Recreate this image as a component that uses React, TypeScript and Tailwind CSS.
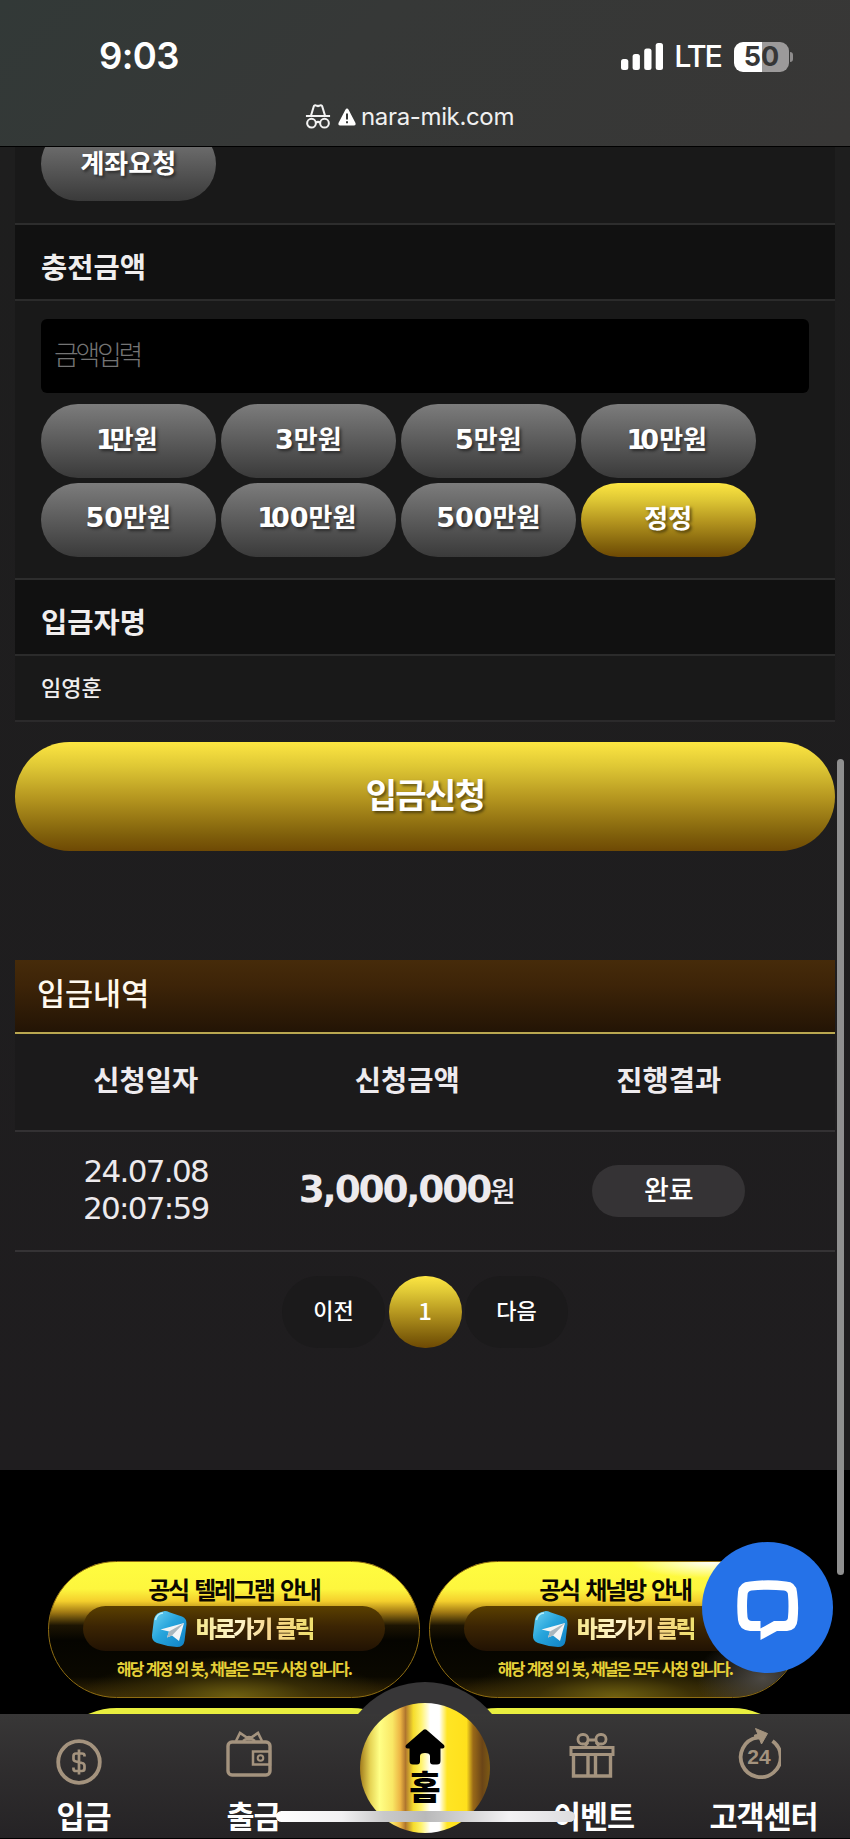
import type { ReactNode } from 'react';

const KR = "font-['Noto_Sans_CJK_KR',sans-serif]";
const gold = 'bg-[linear-gradient(180deg,#fde642_0%,#dfc835_22%,#b4951f_52%,#80600b_85%,#6e4904_100%)]';

function AmountButton({ num, label, active }: { num?: string; label: string; active?: boolean }) {
  const leadingOne = num?.startsWith('1');
  const rest = leadingOne ? num?.slice(1) : num;
  return (
    <button
      className={`flex h-[74px] w-[174.5px] items-center justify-center rounded-full text-[26px] font-bold leading-none text-white [text-shadow:2px_2px_3px_rgba(0,0,0,0.5)] ${
        active ? gold : 'bg-[linear-gradient(180deg,#7c7c7c,#3a3a3a)]'
      }`}
    >
      <span className="-mt-[5px] whitespace-nowrap">
        {num && (
          <span className="font-['DejaVu_Sans'] text-[27px]">
            {leadingOne && <span className="-ml-[3px] tracking-[-5px]">1</span>}
            {rest}
          </span>
        )}
        {label}
      </span>
    </button>
  );
}

function SectionTitle({ children }: { children: ReactNode }) {
  return (
    <h2 className="flex h-[76px] items-center border-b-2 border-[#2b2b2b] bg-[#111111] pl-[26px] pt-[9px] text-[28.5px] font-bold leading-none text-[#f0eeee]">
      {children}
    </h2>
  );
}

function TelegramIcon() {
  return (
    <svg viewBox="0 0 36 38" className="h-[38px] w-9 shrink-0">
      <defs>
        <linearGradient id="tg" x1="0" y1="0" x2="1" y2="1">
          <stop offset="0" stopColor="#6fd3f2" />
          <stop offset="0.45" stopColor="#27a5dc" />
          <stop offset="1" stopColor="#0f7fc4" />
        </linearGradient>
      </defs>
      <path d="M13 1.200 Q15 .8 19 2.500 L31 6.500 Q36 8.500 35.500 14 L33.500 31 Q32.500 37 26 37 Q16 36.500 6 33 Q.5 31 1 25 L3 9 Q4.500 2.500 13 1.200Z" fill="url(#tg)" />
      <path d="M4.500 10 Q6 3.500 12 3" fill="none" stroke="#b5efff" strokeWidth="1.500" />
      <path d="M9.500 19.500 L33 13 L28 31 L21 25.500 L16 27.500 L18 21.500Z" fill="#f3f5f6" />
      <path d="M18 21.500 L33 13 L21 25.500 L16 27.500Z" fill="#a9b6bd" />
    </svg>
  );
}

function Banner({ title, shine }: { title: string; shine?: boolean }) {
  return (
    <div className="relative flex h-[137px] w-[372px] flex-col items-center overflow-hidden rounded-full border border-[#8f6d12] bg-[radial-gradient(ellipse_42%_30%_at_50%_100%,#6f6010_0%,rgba(70,58,8,0.6)_50%,transparent_100%),linear-gradient(180deg,#fffd3f_0%,#fdf63e_20%,#f4cf2d_29%,#a47c14_37%,#1c1402_47%,#050400_58%,#0a0800_85%,#3a2a05_100%)]">
      {shine && (
        <div className="absolute inset-0 bg-[radial-gradient(ellipse_22%_12%_at_76%_0%,#ffffff_0%,transparent_100%),radial-gradient(ellipse_18%_32%_at_90%_86%,#4d4a45_0%,transparent_100%)]" />
      )}
      <div className="relative mt-[14px] whitespace-nowrap text-[24px] font-bold leading-[26px] tracking-[-2.2px] text-[#0c0800] [word-spacing:3px]">{title}</div>
      <div className="relative mt-[4px] flex h-[45px] w-[302px] items-center justify-center rounded-full bg-[linear-gradient(180deg,#5b4000_0%,#3c2503_45%,#211203_100%)]">
        <TelegramIcon />
        <span className="-mt-[3px] ml-[9px] mr-1 whitespace-nowrap bg-[linear-gradient(90deg,#f5e68a,#fff6cf_35%,#f7d489_65%,#efe06f)] bg-clip-text text-[23px] font-black leading-[30px] tracking-[-2.4px] text-transparent [word-spacing:2px]">
          바로가기 클릭
        </span>
      </div>
      <div className="relative mt-[6px] whitespace-nowrap text-[16px] font-bold leading-[22px] tracking-[-1.9px] text-[#e6d038] [word-spacing:1.500px]">
        해당 계정 외 봇, 채널은 모두 사칭 입니다.
      </div>
    </div>
  );
}

function NavItem({ label, icon }: { label: string; icon: ReactNode }) {
  return (
    <div className="flex w-[170px] flex-col items-center">
      <div className="mr-3 flex h-[76px] items-center">{icon}</div>
      <span className="mr-[3px] mt-[7px] whitespace-nowrap text-[30.5px] font-bold leading-[36px] tracking-[-1.1px] text-white">{label}</span>
    </div>
  );
}

const line = { fill: 'none', stroke: '#a4937e', strokeWidth: 3.4 };

export default function App() {
  return (
    <div className={`relative flex h-[1839px] w-[850px] flex-col overflow-hidden bg-[#1f1d1f] text-white ${KR}`}>
      <header className="flex h-[147px] shrink-0 flex-col border-b border-black bg-[linear-gradient(135deg,#323937_0%,#363837_40%,#383736_100%)] font-['Inter']">
        <div className="flex h-[98px] items-center justify-between pl-[99px] pr-[57px] pt-[15px]">
          <span className="text-[36.5px] font-semibold leading-none tracking-[-0.6px]">9:03</span>
          <div className="flex items-center">
            <svg viewBox="0 0 42 27" className="h-[27px] w-[42px] fill-white">
              <rect x="0" y="16" width="7.300" height="11" rx="2.500" />
              <rect x="11.600" y="11" width="7.300" height="16" rx="2.500" />
              <rect x="23.200" y="5.500" width="7.300" height="21.500" rx="2.500" />
              <rect x="34.700" y="0" width="7.300" height="27" rx="2.500" />
            </svg>
            <span className="ml-[11px] text-[30.5px] font-medium leading-none tracking-[-2px]">LTE</span>
            <div className="ml-[13px] flex h-[30px] w-[55px] items-center justify-center rounded-[9px] bg-[linear-gradient(90deg,#ffffff_0_51%,#9c9a9a_51%_100%)] text-[27px] font-bold leading-none text-[#363636]">
              50
            </div>
            <div className="ml-px h-[10px] w-[3px] rounded-r-full bg-[#8e8c8c]" />
          </div>
        </div>
        <div className="flex h-[36px] items-center pl-[305px] pt-px">
          <svg viewBox="0 0 28 27" className="h-[27px] w-[26px]" fill="none" stroke="#f3f3f3" strokeWidth="2.200">
            <path d="M6.500 12.500 L9.500 2.500 Q10 1 12 1.700 L14 2.300 L16 1.700 Q18 1 18.500 2.500 L21.500 12.500 M1 13 H27" />
            <circle cx="7" cy="20.700" r="4.700" />
            <circle cx="21" cy="20.700" r="4.700" />
            <path d="M11.700 20 Q14 18.500 16.300 20" />
          </svg>
          <svg viewBox="0 0 18 18" className="ml-[7px] mt-px h-[18px] w-[18px]">
            <path d="M9 .5 Q10 .5 10.600 1.800 L17.500 15 Q18 17.500 16 17.500 H2 Q0 17.500 .5 15 L7.400 1.800 Q8 .5 9 .5Z" fill="#fff" />
            <path d="M9 5.500 V11.500 M9 13.300 V15.300" stroke="#363837" strokeWidth="2" />
          </svg>
          <span className="ml-[5px] text-[24px] leading-none tracking-[-0.35px] text-[#f0f0f0]">nara-mik.com</span>
        </div>
      </header>

      <main className="flex h-[1323px] shrink-0 flex-col overflow-hidden bg-[linear-gradient(180deg,#1e1e1e,#1f1d1f)] px-[15px]">
        <section className="h-[575px] shrink-0 bg-[#191919]">
          <div className="h-[78px] overflow-hidden border-b-2 border-[#2d2d2d] pl-[26px]">
            <div className="-mt-[20px]">
              <AmountButton label="계좌요청" />
            </div>
          </div>
          <SectionTitle>충전금액</SectionTitle>
          <div className="h-[279px] border-b-2 border-[#2d2d2d] px-[26px] pt-[18px]">
            <input
              placeholder="금액입력"
              className="block h-[74px] w-full rounded-md bg-black pb-[6px] pl-[13px] text-[27px] font-light tracking-[-3.3px] outline-none placeholder:text-[#747474]"
            />
            <div className="mt-[11px] grid grid-cols-[repeat(4,174.5px)] gap-x-[5.5px] gap-y-[4.5px]">
              <AmountButton num="1" label="만원" />
              <AmountButton num="3" label="만원" />
              <AmountButton num="5" label="만원" />
              <AmountButton num="10" label="만원" />
              <AmountButton num="50" label="만원" />
              <AmountButton num="100" label="만원" />
              <AmountButton num="500" label="만원" />
              <AmountButton label="정정" active />
            </div>
          </div>
          <SectionTitle>입금자명</SectionTitle>
          <div className="flex h-[66px] items-center border-b-2 border-[#2b2a2b] pb-[5px] pl-[26px] text-[22px] font-medium leading-none text-[#f0eeee]">임영훈</div>
        </section>

        <button
          className={`mt-5 flex h-[109px] shrink-0 items-center justify-center rounded-full pb-[6px] text-[34px] font-bold leading-none tracking-[-1.6px] [text-shadow:2px_2px_3px_rgba(0,0,0,0.5)] ${gold}`}
        >
          입금신청
        </button>

        <section className="mt-[109px] shrink-0">
          <h2 className="flex h-[74px] items-center border-b-2 border-[#b9a750] bg-[linear-gradient(180deg,#462b0a,#3d2408_35%,#231405)] pb-[7px] pl-[22px] text-[30.5px] font-medium leading-none text-[#fff9ee]">
            입금내역
          </h2>
          <div className="grid h-[98px] grid-cols-[261.5px_261.5px_261.5px] items-center border-b-2 border-[#333133] bg-[#1b1a1b] pb-[6px] text-center text-[28.5px] font-bold leading-none text-[#eeebee]">
            <span>신청일자</span>
            <span>신청금액</span>
            <span>진행결과</span>
          </div>
          <div className="grid h-[120px] grid-cols-[261.5px_261.5px_261.5px] items-center border-b-2 border-[#353335] text-center text-[#edeaed]">
            <div className="-mt-[2px] font-['DejaVu_Sans'] text-[31px] leading-[37px] tracking-[-1.7px]">
              24.07.08
              <br />
              20:07:59
            </div>
            <div className="-mt-[3px] whitespace-nowrap leading-none">
              <span className="font-['DejaVu_Sans'] text-[37.5px] font-bold tracking-[-2.2px]">3,000,000</span>
              <span className="text-[28px] font-medium">원</span>
            </div>
            <div className="flex justify-center">
              <span className="flex h-[52px] w-[153px] items-center justify-center rounded-full bg-[#353335] pb-[5px] text-[27px] font-medium leading-none text-white">완료</span>
            </div>
          </div>
          <div className="mt-6 flex h-[72px] justify-center gap-[3.5px] text-[22px] font-medium leading-none">
            <span className="flex w-[103px] items-center justify-center rounded-full bg-[#1b1a1b] pb-[6px]">이전</span>
            <span className={`flex w-[73px] items-center justify-center rounded-full pb-[5px] text-[24px] ${gold}`}>1</span>
            <span className="flex w-[103px] items-center justify-center rounded-full bg-[#1b1a1b] pb-[6px]">다음</span>
          </div>
        </section>
      </main>

      <footer className="grid grow grid-cols-[372px_372px] content-start gap-x-[9px] gap-y-[10px] bg-black pl-[48px] pt-[91px]">
        <Banner title="공식 텔레그램 안내" />
        <Banner title="공식 채널방 안내" shine />
        <div className="h-[137px] rounded-full bg-[#e9ef3f]" />
        <div className="h-[137px] rounded-full bg-[#e9ef3f]" />
      </footer>

      <div className="absolute right-[6.500px] top-[759px] h-[816px] w-[6.500px] rounded-full bg-[#8f8f8f]" />

      <div className="absolute left-[702px] top-[1542px] flex h-[131px] w-[131px] items-center justify-center rounded-full bg-[#2572e8]">
        <svg viewBox="0 0 62 60" className="mt-1 h-[60px] w-[62px]">
          <path
            fillRule="evenodd"
            fill="#fff"
            d="M13 1.500 Q31 -1 49 1.500 Q59 2 60 12 Q62 26 60.500 40 Q60 50 50 51 H40 L23.500 60 V51 H13 Q2 50 1 40 Q-.5 26 1 12 Q2 2 13 1.500Z M14.500 10.500 Q10.500 11 10.500 15 Q9.500 26 10.500 37 Q11 41 15 41 H23.500 V48.500 L37 41 H47 Q51 41 51 37 Q52 26 51 15 Q51 11 47 10.500 Q31 9 14.500 10.500Z"
          />
        </svg>
      </div>

      <div className="absolute bottom-[-15px] left-[339px] h-[172px] w-[172px] rounded-full bg-[#373637]" />
      <nav className="absolute bottom-0 left-0 flex h-[125px] w-full border-b border-black bg-[linear-gradient(180deg,#383737_0%,#2f2d2e_45%,#252325_100%)]">
        <NavItem
          label="입금"
          icon={
            <svg viewBox="0 0 46 46" className="mt-5 h-[46px] w-[46px]" {...line}>
              <circle cx="23" cy="23" r="20.800" strokeWidth="3.800" />
              <path d="M28.500 17.500 V16.500 Q28.500 14.500 26 14.500 H20 Q17.500 14.500 17.500 17 V20 Q17.500 22 20 22.500 L26 24 Q28.500 24.500 28.500 27 V29.500 Q28.500 32 26 32 H20 Q17.500 32 17.500 30 V28.500 M23 10.500 V35.500" strokeWidth="2.700" />
            </svg>
          }
        />
        <NavItem
          label="출금"
          icon={
            <svg viewBox="0 0 46 46" className="mt-1 h-[46px] w-[46px]" {...line}>
              <rect x="2" y="11" width="42" height="33" rx="4" />
              <path d="M10 10 L14 2 L23 8 L32 2 L36 10 M17 10 L23 6 L29 10" strokeWidth="2.600" />
              <rect x="27" y="20.500" width="17" height="13" strokeWidth="2.500" />
              <circle cx="34.500" cy="27" r="2.800" strokeWidth="2" />
            </svg>
          }
        />
        <div className="w-[170px]" />
        <NavItem
          label="이벤트"
          icon={
            <svg viewBox="0 0 46 46" className="ml-[6px] mt-[5px] h-[46px] w-[46px]" {...line}>
              <rect x="2" y="15.500" width="42" height="7" strokeWidth="3" />
              <path d="M4.500 23 V44 H41.500 V23 M19 23 V44 M26.500 23 V44" />
              <rect x="9" y="2.500" width="10" height="9.500" rx="4.500" strokeWidth="2.800" />
              <rect x="27" y="2.500" width="10" height="9.500" rx="4.500" strokeWidth="2.800" />
              <path d="M18 8 H28 M19 10 L16 14 M27 10 L30 14" strokeWidth="3" />
            </svg>
          }
        />
        <NavItem
          label="고객센터"
          icon={
            <svg viewBox="0 0 44 52" className="mt-[4px] h-[52px] w-11" {...line}>
              <path d="M35.500 13 A20 20 0 1 1 20 9.500" strokeWidth="3.800" />
              <path d="M18.500 0.500 L30.500 5.500 L24.500 16 L22.500 11 L18 11 L17.500 7 L21 6.500Z" fill="#a4937e" strokeWidth="1" />
              <text x="22" y="36" textAnchor="middle" fontSize="21" fontWeight="700" fontFamily="Liberation Sans" fill="#a4937e" stroke="none">
                24
              </text>
            </svg>
          }
        />
      </nav>

      <div className="absolute bottom-[6px] left-[360px] flex h-[130px] w-[130px] flex-col items-center rounded-full bg-[linear-gradient(90deg,#a27c1c_0%,#e6d455_8%,#ffff86_15%,#f9e765_25%,#ecb444_31%,#b0762e_35%,#f5dc2c_41%,#fff36a_47%,#ffffff_54%,#ffffff_61%,#ffe524_67%,#ffe01c_82%,#9a6a18_87%,#6b4517_94%,#7d5a14_100%)] pt-[26px]">
        <svg viewBox="0 0 40 36" className="h-9 w-10">
          <path d="M18.500 .7 Q20 -.3 21.500 .7 L39 16 Q40.500 19 37.500 19.500 H35.500 V32 Q35.500 35.500 32 35.500 H28 Q25 35.500 25 32.500 V27 Q25 24 20 24 Q15 24 15 27 V32.500 Q15 35.500 12 35.500 H8 Q4.500 35.500 4.500 32 V19.500 H2.500 Q-.5 19 1 16Z" />
        </svg>
        <span className="mt-px text-[34px] font-black leading-[40px] text-black">홈</span>
      </div>
      <div className="absolute bottom-[17px] left-[276px] h-[11px] w-[299px] rounded-full bg-[linear-gradient(90deg,#ffffff_0%,#f2f1f3_22%,#c9c9ca_36%,#b9b9ba_50%,#d0d0d1_62%,#f3f2f4_78%,#dddcde_100%)]" />
    </div>
  );
}
